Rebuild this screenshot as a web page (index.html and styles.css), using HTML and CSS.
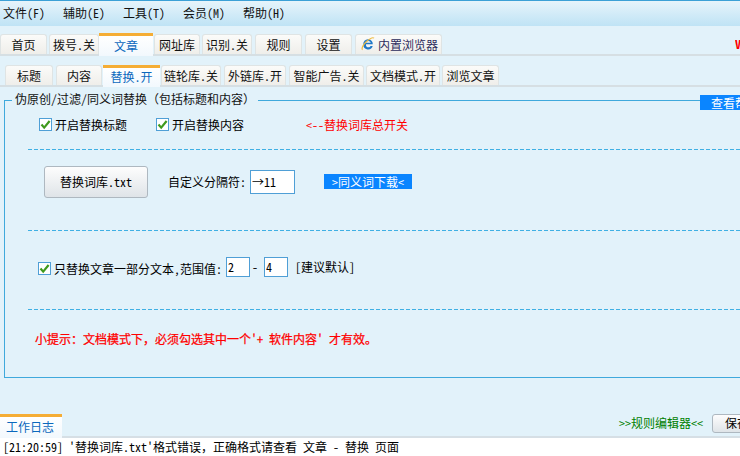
FILE: index.html
```html
<!DOCTYPE html>
<html lang="zh">
<head>
<meta charset="utf-8">
<title>伪原创</title>
<link rel="stylesheet" href="styles.css">
</head>
<body>
<svg class="defs" width="0" height="0">
  <symbol id="check" viewBox="0 0 13 13">
    <rect x="0.5" y="0.5" width="12" height="12" fill="#fff" stroke="#4f9fd6"/>
    <path d="M2.5 6.500 L5.200 9.600 L10.600 3" fill="none" stroke="#3f9a1c" stroke-width="2.200"/>
  </symbol>
</svg>
<div class="app">
  <nav class="menubar">
    <span class="menu">文件(F)</span>
    <span class="menu">辅助(E)</span>
    <span class="menu">工具(T)</span>
    <span class="menu">会员(M)</span>
    <span class="menu">帮助(H)</span>
  </nav>

  <div class="tabs tabs-main">
    <span class="tab w47">首页</span>
    <span class="tab w50 gap2">拨号.关</span>
    <span class="tab tab-on w54">文章</span>
    <span class="tab w46 gap1">网址库</span>
    <span class="tab w50 gap2">识别.关</span>
    <span class="tab w47 gap3">规则</span>
    <span class="tab w47 gap3">设置</span>
    <span class="tab w87 gap3 tab-browser">
      <svg class="ie" width="14" height="14" viewBox="0 0 14 14">
        <path d="M7 2.200a4.800 4.800 0 0 1 4.800 5H5v1.200c.3 1.200 1.200 1.900 2.400 1.900 1 0 1.800-.5 2.200-1.300h2.100A4.800 4.800 0 0 1 2.300 7.500 4.800 4.800 0 0 1 7 2.200zM5 5.800h4.700C9.500 4.600 8.500 3.900 7.300 3.900S5.200 4.600 5 5.800z" fill="#1f78c8"/>
        <path d="M1.500 12.700C.3 11.700 2 7.500 5.500 4.500S12 .2 13 1.200" fill="none" stroke="#eebc3e" stroke-width="1.200"/>
      </svg>内置浏览器</span>
    <span class="version">V</span>
  </div>

  <div class="tabs tabs-sub">
    <span class="tab w48">标题</span>
    <span class="tab w46 gap3">内容</span>
    <span class="tab tab-on w57 gap1">替换.开</span>
    <span class="tab w60 gap1">链轮库.关</span>
    <span class="tab w62 gap3">外链库.开</span>
    <span class="tab w75 gap3">智能广告.关</span>
    <span class="tab w74 gap2">文档模式.开</span>
    <span class="tab w57 gap2">浏览文章</span>
  </div>

  <fieldset class="group">
    <legend class="group-title">伪原创/过滤/同义词替换（包括标题和内容）</legend>

    <div class="row row-a">
      <label class="check"><svg class="box"><use href="#check"/></svg>开启替换标题</label>
      <label class="check check-2"><svg class="box"><use href="#check"/></svg>开启替换内容</label>
      <span class="alert alert-switch">&lt;--替换词库总开关</span>
    </div>

    <div class="row row-b">
      <button class="btn btn-file" type="button">替换词库.txt</button>
      <span class="sep-label">自定义分隔符:</span>
      <input class="field field-sep" type="text" value="→11">
      <a class="dl">&gt;同义词下载&lt;</a>
    </div>

    <div class="row row-c">
      <label class="check"><svg class="box"><use href="#check"/></svg>只替换文章一部分文本,范围值:</label>
      <input class="field field-num" type="text" value="2">
      <span class="dash">-</span>
      <input class="field field-num" type="text" value="4">
      <span class="hint">[建议默认]</span>
    </div>

    <div class="tip alert">小提示：文档模式下，必须勾选其中一个'+ 软件内容' 才有效。</div>
  </fieldset>

  <a class="help">查看帮助</a>

  <div class="logbar">
    <span class="tab tab-on tab-log">工作日志</span>
    <a class="editor">&gt;&gt;规则编辑器&lt;&lt;</a>
    <button class="btn btn-save" type="button">保存</button>
  </div>
  <div class="log">[21:20:59] '替换词库.txt'格式错误，正确格式请查看 文章 - 替换 页面</div>
</div>
</body>
</html>
```
FILE: styles.css
```css
* { box-sizing: border-box; }
html, body { margin: 0; padding: 0; }
body { width: 740px; height: 456px; overflow: hidden; }
.defs { position: absolute; }
.app {
  position: relative;
  width: 740px;
  height: 456px;
  overflow: hidden;
  display: flex;
  flex-direction: column;
  background: #e2f2fa;
  color: #000;
  font: 12px/13px "Noto Sans Mono CJK SC", "Noto Sans CJK SC", "Liberation Mono", monospace;
}

/* menu */
.menubar {
  height: 26px;
  flex: none;
  display: flex;
  align-items: center;
  padding: 0 0 2px 3px;
  border-top: 1px solid #3ba0d6;
  background: linear-gradient(#e6f4fb, #bfe3f5);
}
.menu { width: 60px; color: #111; }

/* tabs */
.tabs {
  flex: none;
  display: flex;
  align-items: flex-end;
  border-bottom: 2px solid #d6dfe3;
}
.tabs-main { height: 30px; }
.tabs-sub { height: 31px; padding-left: 5px; }
.tab {
  height: 20px;
  display: flex;
  align-items: center;
  justify-content: center;
  padding-bottom: 1px;
  border: 1px solid #dfe4e4;
  border-bottom: 0;
  border-radius: 3px 3px 0 0;
  background: linear-gradient(#fbfbf9, #efeeea);
  color: #111;
  white-space: nowrap;
}
.tab-on {
  height: 23px;
  margin-bottom: -2px;
  padding-bottom: 2px;
  border: 0;
  border-top: 3px solid #f5ad35;
  border-radius: 0;
  background: linear-gradient(#ffffff, #f2f8fd);
  color: #0b68bd;
}
.tabs-sub .tab-on { height: 22px; }
.tab-browser { color: #2b2b5c; gap: 3px; justify-content: flex-start; padding-left: 5px; }
.ie { flex: none; }
.w46 { width: 46px; } .w47 { width: 47px; } .w48 { width: 48px; }
.w50 { width: 50px; } .w54 { width: 54px; } .w57 { width: 57px; }
.w60 { width: 60px; } .w62 { width: 62px; } .w74 { width: 74px; }
.w75 { width: 75px; } .w87 { width: 87px; }
.gap1 { margin-left: 1px; } .gap2 { margin-left: 2px; } .gap3 { margin-left: 3px; }
.version {
  margin-left: auto;
  width: 5px;
  margin-bottom: 4px;
  overflow: hidden;
  color: #f00;
  font-weight: 700;
}

/* group */
.group {
  flex: none;
  width: 800px;
  height: 286px;
  margin: 5px 0 0 4px;
  padding: 0;
  min-width: 0;
  border: 1px solid #3fa9dc;
}
.group-title { margin-left: 7px; padding: 0 3px; height: 16px; line-height: 14px; color: #111; }
.row {
  margin-left: 23px;
  display: flex;
  align-items: flex-start;
  background: repeating-linear-gradient(90deg, #3fb0e4 0 4px, transparent 4px 6px) left bottom / 100% 1px no-repeat;
}
.row-a { height: 42px; padding: 10px 0 0 11px; }
.row-b { height: 81px; padding: 16px 0 0 16px; }
.row-c { height: 79px; padding: 26px 0 0 10px; }
.check { display: flex; align-items: center; gap: 3px; height: 13px; white-space: nowrap; }
.row-c .check { margin-top: 5px; width: 188px; }
.box { width: 13px; height: 13px; flex: none; }
.check-2 { margin-left: 29px; }
.alert { color: #f00; }
.alert-switch { margin-left: 62px; }
.btn {
  font: inherit;
  color: #000;
  padding: 0 0 2px;
  border: 1px solid #aeb8c0;
  border-radius: 3px;
  background: linear-gradient(#fdfdfd, #dfe4e8);
}
.btn-file { width: 104px; height: 32px; }
.sep-label { margin: 9px 0 0 20px; width: 75px; white-space: nowrap; }
.field {
  font: inherit;
  color: #000;
  padding: 0 0 2px 1px;
  background: #fff;
  border: 1px solid #4f9fd6;
  border-radius: 0;
  outline: 0;
}
.field-sep { width: 45px; height: 24px; margin: 4px 0 0 7px; }
.dl {
  width: 88px;
  height: 15px;
  margin: 8px 0 0 29px;
  background: #0a85ff;
  color: #fff;
  line-height: 15px;
  text-align: center;
  white-space: nowrap;
}
.field-num { width: 24px; height: 20px; }
.dash { width: 14px; margin-top: 3px; padding-left: 2px; }
.hint { margin: 3px 0 0 7px; }
.tip { margin: 22px 0 0 30px; -webkit-text-stroke: 0.25px #f00; white-space: nowrap; }

.help {
  position: absolute;
  left: 700px;
  top: 95px;
  width: 60px;
  height: 15px;
  padding-left: 11px;
  background: #0a85ff;
  color: #fff;
  line-height: 15px;
  white-space: nowrap;
}

/* footer */
.logbar {
  flex: none;
  height: 24px;
  margin-top: auto;
  display: flex;
  align-items: flex-end;
  border-bottom: 2px solid #d6dfe5;
}
.tab-log { width: 62px; height: 24px; padding-right: 2px; }
.editor { margin: 0 0 7px auto; width: 84px; color: #008000; white-space: nowrap; }
.btn-save { flex: none; width: 50px; height: 19px; margin: 0 -22px 3px 9px; }
.log {
  flex: none;
  height: 18px;
  padding-left: 3px;
  background: #fff;
  line-height: 17px;
  white-space: nowrap;
}
```
